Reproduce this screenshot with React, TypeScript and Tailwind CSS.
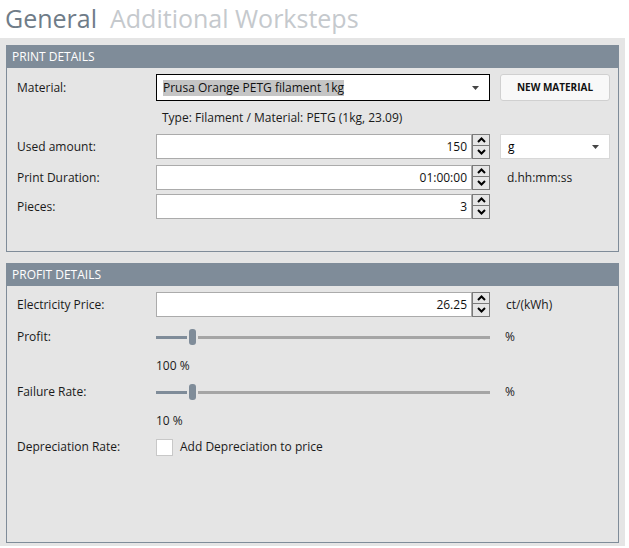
import React from 'react';

const font = { fontFamily: '"Open Sans", "Noto Sans", sans-serif' };

function Spinner() {
  return (
    <div className="flex w-[18px] flex-col border border-[#7a7a7a] bg-[#e6e6e6]">
      <div className="flex h-[11px] items-center justify-center border-b border-[#7a7a7a]">
        <svg width="9" height="6" viewBox="0 0 9 6">
          <path d="M1 5 L4.5 1.5 L8 5" fill="none" stroke="#000" strokeWidth="2" />
        </svg>
      </div>
      <div className="flex h-[11px] items-center justify-center">
        <svg width="9" height="6" viewBox="0 0 9 6">
          <path d="M1 1 L4.5 4.5 L8 1" fill="none" stroke="#000" strokeWidth="2" />
        </svg>
      </div>
    </div>
  );
}

function NumberBox({ value }: { value: string }) {
  return (
    <div className="flex h-[25px] w-[334px]">
      <div className="flex flex-1 items-center justify-end border border-[#ababab] bg-white pr-1 text-[12px] text-[#111]">
        {value}
      </div>
      <Spinner />
    </div>
  );
}

function Caret() {
  return (
    <svg width="7" height="4" viewBox="0 0 7 4">
      <path d="M0 0 L7 0 L3.5 4 Z" fill="#444" />
    </svg>
  );
}

function Slider() {
  return (
    <div className="relative flex h-[18px] w-[334px] items-center">
      <div className="h-[3px] w-[31px] bg-[#7f8c99]" />
      <div className="mx-[2px] h-[16px] w-[7px] rounded-[3px] bg-[#7f8c99]" />
      <div className="h-[3px] flex-1 bg-[#a5a5a5]" />
    </div>
  );
}

function Row({ label, children, h = 'h-[25px]' }: { label: string; children: React.ReactNode; h?: string }) {
  return (
    <div className={`flex items-center ${h}`}>
      <div className="w-[149px] pl-[10px] text-[12px] text-[#1a1a1a]">{label}</div>
      {children}
    </div>
  );
}

export default function App() {
  return (
    <div className="h-[548px] w-[629px] bg-white" style={font}>
      <div className="flex h-[38px] items-center gap-[13px] pl-[5px] pb-[2px] text-[25px] leading-none">
        <span className="text-[#6f7c88]">General</span>
        <span className="text-[#c5c9cd]">Additional Worksteps</span>
      </div>
      <div className="flex h-[508px] w-[625px] flex-col gap-[11px] bg-[#e5e5e5] px-[6px] pt-[7px]">
        {/* Print details */}
        <div className="flex h-[207px] flex-col border border-[#7f8c99]">
          <div className="flex h-[22px] items-center bg-[#7f8c99] pl-[5px] text-[12px] text-white">PRINT DETAILS</div>
          <div className="flex flex-col pt-[6px]">
            <Row label="Material:" h="h-[27px]">
              <div className="flex h-[27px] w-[334px] items-center justify-between border border-black bg-white pl-[6px] pr-[10px]">
                <span className="bg-[#c5c5c5] text-[12px] leading-[16px] text-[#111]">Prusa Orange PETG filament 1kg</span>
                <Caret />
              </div>
              <div className="ml-[10px] flex h-[27px] w-[110px] items-center justify-center rounded-[3px] border border-[#d0d0d0] bg-[#f8f8f8] text-[10px] font-bold text-[#111]">
                NEW MATERIAL
              </div>
            </Row>
            <div className="flex h-[33px] items-center pl-[155px] text-[12px] text-[#1a1a1a]">
              Type: Filament / Material: PETG (1kg, 23.09)
            </div>
            <div className="flex flex-col">
              <Row label="Used amount:">
                <NumberBox value="150" />
                <div className="ml-[10px] flex h-[25px] w-[110px] items-center justify-between border border-[#d8d8d8] bg-white pl-[7px] pr-[10px] text-[12px]">
                  <span>g</span>
                  <Caret />
                </div>
              </Row>
              <div className="mt-[6px]">
                <Row label="Print Duration:">
                  <NumberBox value="01:00:00" />
                  <span className="ml-[17px] text-[12px] text-[#1a1a1a]">d.hh:mm:ss</span>
                </Row>
              </div>
              <div className="mt-[4px]">
                <Row label="Pieces:">
                  <NumberBox value="3" />
                </Row>
              </div>
            </div>
          </div>
        </div>

        {/* Profit details */}
        <div className="flex h-[280px] flex-col border border-[#7f8c99]">
          <div className="flex h-[22px] items-center bg-[#7f8c99] pl-[5px] text-[12px] text-white">PROFIT DETAILS</div>
          <div className="flex flex-col pt-[6px]">
            <Row label="Electricity Price:">
              <NumberBox value="26.25" />
              <span className="ml-[16px] text-[12px] text-[#1a1a1a]">ct/(kWh)</span>
            </Row>
            <Row label="Profit:" h="h-[40px]">
              <Slider />
              <span className="ml-[15px] text-[12px] text-[#1a1a1a]">%</span>
            </Row>
            <div className="flex h-[18px] items-center pl-[149px] text-[12px] text-[#1a1a1a]">100 %</div>
            <Row label="Failure Rate:" h="h-[34px]">
              <Slider />
              <span className="ml-[15px] text-[12px] text-[#1a1a1a]">%</span>
            </Row>
            <div className="flex h-[24px] items-center pl-[149px] text-[12px] text-[#1a1a1a]">10 %</div>
            <Row label="Depreciation Rate:" h="h-[28px]">
              <div className="h-[17px] w-[17px] border border-[#c8c8c8] bg-white" />
              <span className="ml-[7px] text-[12px] text-[#1a1a1a]">Add Depreciation to price</span>
            </Row>
          </div>
        </div>
      </div>
    </div>
  );
}
